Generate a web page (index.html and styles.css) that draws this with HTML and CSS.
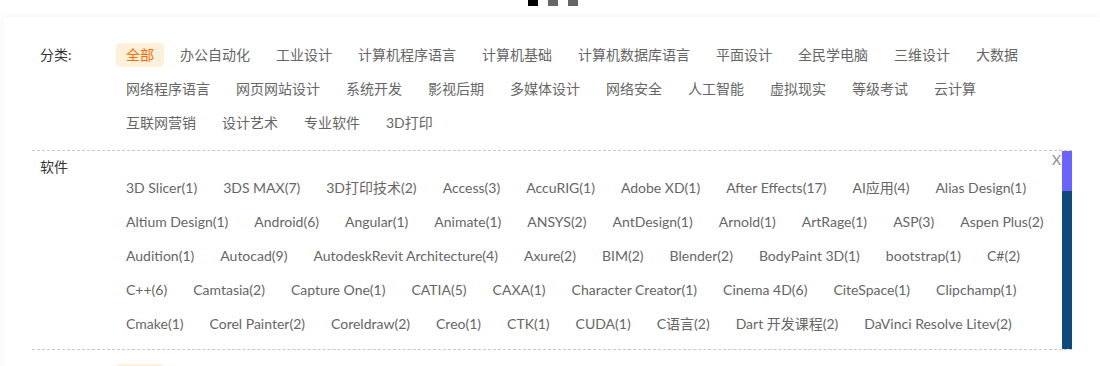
FILE: index.html
```html
<!DOCTYPE html>
<html lang="zh-CN">
<head>
    <meta charset="UTF-8">
    <meta name="viewport" content="width=device-width, initial-scale=1.0">
    <title>课程分类</title>
    <link rel="stylesheet" href="styles.css">
</head>
<body>
    <div class="banner-dots">
        <span class="active"></span>
        <span></span>
        <span></span>
    </div>

    <div class="filter-card">
        <!-- 分类 -->
        <div class="filter-row">
            <div class="filter-label">分类:</div>
            <ul class="filter-list">
                <li class="active">全部</li>
                <li>办公自动化</li>
                <li>工业设计</li>
                <li>计算机程序语言</li>
                <li>计算机基础</li>
                <li>计算机数据库语言</li>
                <li>平面设计</li>
                <li>全民学电脑</li>
                <li>三维设计</li>
                <li>大数据</li>
                <li>网络程序语言</li>
                <li>网页网站设计</li>
                <li>系统开发</li>
                <li>影视后期</li>
                <li>多媒体设计</li>
                <li>网络安全</li>
                <li>人工智能</li>
                <li>虚拟现实</li>
                <li>等级考试</li>
                <li>云计算</li>
                <li>互联网营销</li>
                <li>设计艺术</li>
                <li>专业软件</li>
                <li>3D打印</li>
            </ul>
        </div>

        <!-- 软件 -->
        <div class="soft-box">
            <div class="soft-content">
                <span class="soft-close">X</span>
                <div class="soft-label">软件</div>
                <ul class="filter-list soft-list">
                    <li>3D Slicer(1)</li>
                    <li>3DS MAX(7)</li>
                    <li>3D打印技术(2)</li>
                    <li>Access(3)</li>
                    <li>AccuRIG(1)</li>
                    <li>Adobe XD(1)</li>
                    <li>After Effects(17)</li>
                    <li>AI应用(4)</li>
                    <li>Alias Design(1)</li>
                    <li>Altium Design(1)</li>
                    <li>Android(6)</li>
                    <li>Angular(1)</li>
                    <li>Animate(1)</li>
                    <li>ANSYS(2)</li>
                    <li>AntDesign(1)</li>
                    <li>Arnold(1)</li>
                    <li>ArtRage(1)</li>
                    <li>ASP(3)</li>
                    <li>Aspen Plus(2)</li>
                    <li>Audition(1)</li>
                    <li>Autocad(9)</li>
                    <li>AutodeskRevit Architecture(4)</li>
                    <li>Axure(2)</li>
                    <li>BIM(2)</li>
                    <li>Blender(2)</li>
                    <li>BodyPaint 3D(1)</li>
                    <li>bootstrap(1)</li>
                    <li>C#(2)</li>
                    <li>C++(6)</li>
                    <li>Camtasia(2)</li>
                    <li>Capture One(1)</li>
                    <li>CATIA(5)</li>
                    <li>CAXA(1)</li>
                    <li>Character Creator(1)</li>
                    <li>Cinema 4D(6)</li>
                    <li>CiteSpace(1)</li>
                    <li>Clipchamp(1)</li>
                    <li>Cmake(1)</li>
                    <li>Corel Painter(2)</li>
                    <li>Coreldraw(2)</li>
                    <li>Creo(1)</li>
                    <li>CTK(1)</li>
                    <li>CUDA(1)</li>
                    <li>C语言(2)</li>
                    <li>Dart 开发课程(2)</li>
                    <li>DaVinci Resolve Litev(2)</li>
                </ul>
            </div>
            <div class="soft-scroll">
                <span class="soft-thumb"></span>
            </div>
        </div>

        <!-- 难度 -->
        <div class="filter-row filter-row-next">
            <div class="filter-label">难度:</div>
            <ul class="filter-list">
                <li class="active">全部</li>
                <li>入门</li>
                <li>初级</li>
                <li>中级</li>
                <li>高级</li>
            </ul>
        </div>
    </div>
</body>
</html>
```

FILE: styles.css
```css
:root {
    --text-color: #666;
    --label-color: #333;
    --accent: #ff6a00;
    --accent-bg: #fff0dc;
    --dash-color: #c8c8c8;
    --thumb-color: #6b63ff;
    --track-color: #0f4a7c;
}

body {
    margin: 0;
    font-family: Lato, "Noto Sans CJK SC", sans-serif;
    font-size: 14px;
    color: var(--text-color);
    background-color: #fff;
}

ul {
    list-style: none;
    margin: 0;
    padding: 0;
}

.banner-dots {
    display: flex;
    justify-content: center;
    align-items: flex-end;
    gap: 10px;
    height: 6px;
    overflow: hidden;
    padding-left: 6px;
}

.banner-dots span {
    flex: none;
    width: 10px;
    height: 10px;
    background-color: #666;
}

.banner-dots .active {
    background-color: #000;
}

.filter-card {
    margin: 11px 0 0 3px;
    padding: 26px 28px 0 29px;
    background-color: #fff;
    box-shadow: 0 0 6px rgba(0, 0, 0, 0.07);
}

.filter-row {
    display: flex;
    align-items: flex-start;
    padding-bottom: 5px;
}

.filter-row-next {
    padding-top: 14px;
}

.filter-label {
    flex: none;
    width: 84px;
    box-sizing: border-box;
    padding-left: 8px;
    line-height: 24px;
    color: var(--label-color);
}

.filter-list {
    flex: 1;
    display: flex;
    flex-wrap: wrap;
}

.filter-list li {
    height: 24px;
    line-height: 24px;
    padding: 0 10px;
    margin: 0 6px 10px 0;
    border-radius: 4px;
    white-space: nowrap;
    cursor: pointer;
}

.filter-list li.active {
    background-color: var(--accent-bg);
    color: var(--accent);
}

/* software box, its bar stands in for the scrollbar */
.soft-box {
    display: flex;
    height: 198px;
    border-top: 1px dashed var(--dash-color);
    border-bottom: 1px dashed var(--dash-color);
}

.soft-content {
    position: relative;
    flex: 1;
    overflow: hidden;
}

.soft-label {
    padding: 7px 0 0 8px;
    line-height: 18px;
    color: var(--label-color);
}

.soft-close {
    position: absolute;
    top: 0;
    right: 1px;
    font-size: 14px;
    line-height: 18px;
    color: #888;
    cursor: pointer;
}

.soft-list {
    margin-left: 84px;
}

.soft-scroll {
    flex: none;
    width: 10px;
    background-color: var(--track-color);
}

.soft-thumb {
    display: block;
    height: 40px;
    background-color: var(--thumb-color);
}
```
